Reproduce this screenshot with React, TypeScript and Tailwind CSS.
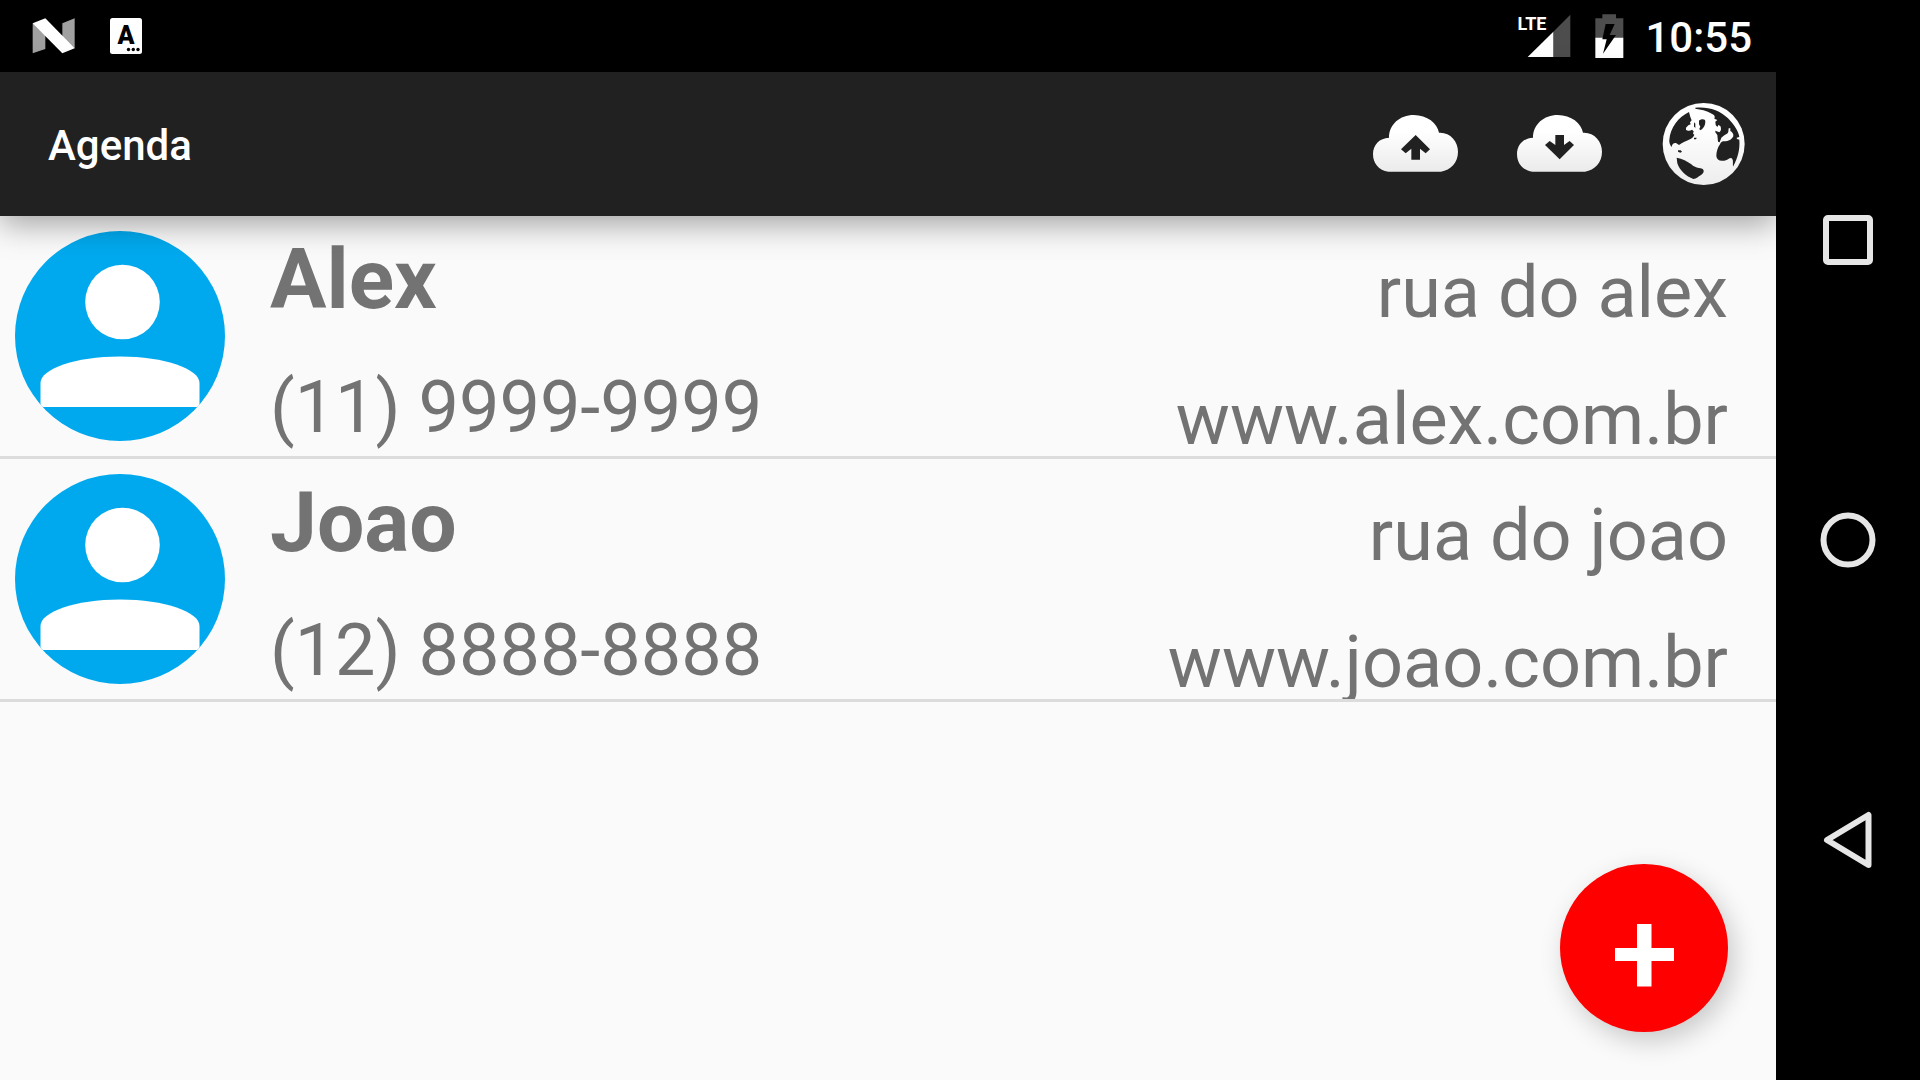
type Contact = {
  id: number;
  name: string;
  phone: string;
  address: string;
  site: string;
};

const contacts: Contact[] = [
  {
    id: 1,
    name: "Alex",
    phone: "(11) 9999-9999",
    address: "rua do alex",
    site: "www.alex.com.br",
  },
  {
    id: 2,
    name: "Joao",
    phone: "(12) 8888-8888",
    address: "rua do joao",
    site: "www.joao.com.br",
  },
];

export default function App() {
  return (
    <div className="flex min-h-screen bg-black font-[Roboto,sans-serif]">
      <div className="relative flex flex-1 flex-col overflow-hidden">
        <StatusBar />
        <AppBar />
        <main className="flex-1 bg-[#fafafa]">
          <ul>
            {contacts.map((contact) => (
              <ContactRow {...contact} key={contact.id} />
            ))}
          </ul>
        </main>
        <AddButton />
      </div>
      <NavigationBar />
    </div>
  );
}

function StatusBar() {
  return (
    <div className="flex h-18 items-center justify-between bg-black pr-6 pl-8 text-white">
      <div className="flex items-center gap-[34px]">
        <NougatIcon />
        <KeyboardIcon />
      </div>
      <div className="flex items-center">
        <SignalIcon />
        <BatteryIcon />
        <span className="ml-[21px] pt-1 text-[42px] leading-[48px] font-medium">
          10:55
        </span>
      </div>
    </div>
  );
}

function AppBar() {
  return (
    <header className="relative z-10 flex h-36 items-center justify-between bg-[#212121] pl-12 shadow-[0_8px_30px_rgba(0,0,0,0.36)]">
      <h1 className="pt-1 text-[42px] leading-[48px] font-medium text-white">
        Agenda
      </h1>
      <div className="flex">
        <ActionButton label="Upload">
          <CloudIcon id="cloud-up" arrow="M227 165 L270 208 L257 220 L240 206 V239 H214 V206 L197 220 L183 208 Z" />
        </ActionButton>
        <ActionButton label="Download">
          <CloudIcon id="cloud-down" arrow="M227 238 L270 195 L257 183 L240 195 V165 H214 V195 L197 183 L183 195 Z" />
        </ActionButton>
        <ActionButton label="Map">
          <GlobeIcon />
        </ActionButton>
      </div>
    </header>
  );
}

function ActionButton({
  label,
  children,
}: {
  label: string;
  children: React.ReactNode;
}) {
  return (
    <button
      type="button"
      aria-label={label}
      className="flex size-36 items-center justify-center"
    >
      {children}
    </button>
  );
}

function ContactRow({ name, phone, address, site }: Contact) {
  return (
    <li className="flex h-[243px] justify-between overflow-hidden border-b-3 border-[#dcdcdc] pr-12 pl-[15px] text-[72px] leading-[96px] text-[#737373]">
      <div className="flex items-start gap-[45px] pt-[15px]">
        <Avatar />
        <div className="flex flex-col gap-8 pt-px">
          <h2 className="text-[84px] leading-[96px] font-bold">{name}</h2>
          <p>{phone}</p>
        </div>
      </div>
      <div className="flex flex-col items-end gap-[31px] pt-[29px]">
        <p>{address}</p>
        <a href={`http://${site}`}>{site}</a>
      </div>
    </li>
  );
}

function Avatar() {
  return (
    <svg viewBox="0 0 210 210" className="size-[210px] shrink-0">
      <clipPath id="avatar-clip">
        <circle cx="105" cy="105" r="105" />
      </clipPath>
      <g clipPath="url(#avatar-clip)">
        <rect width="210" height="210" fill="#00a9ee" />
        <circle cx="107.5" cy="71" r="37.3" fill="#fff" />
        <path
          d="M25.5 176 V152 C25.5 138 60 125.5 105 125.5 S184.5 138 184.5 152 V176 Z"
          fill="#fff"
        />
      </g>
    </svg>
  );
}

function AddButton() {
  return (
    <button
      type="button"
      aria-label="Add contact"
      className="absolute right-12 bottom-12 size-42 rounded-full bg-[#ff0000] shadow-[6px_9px_27px_rgba(0,0,0,0.2)]"
    >
      <svg viewBox="0 0 168 168" className="size-full">
        <path d="M77 60 H91.5 V84 H114 V97 H91.5 V122.5 H77 V97 H55 V84 H77 Z" fill="#fff" />
      </svg>
    </button>
  );
}

function NavigationBar() {
  return (
    <nav className="flex w-36 shrink-0 flex-col bg-black py-[90px]">
      <NavButton label="Recent apps">
        <rect x="26" y="26" width="44" height="44" rx="2" />
      </NavButton>
      <NavButton label="Home">
        <circle cx="48" cy="48" r="24.5" />
      </NavButton>
      <NavButton label="Back">
        <path d="M27 48 L68.5 23 V73 Z" />
      </NavButton>
    </nav>
  );
}

function NavButton({
  label,
  children,
}: {
  label: string;
  children: React.ReactNode;
}) {
  return (
    <button
      type="button"
      aria-label={label}
      className="flex flex-1 items-center justify-center"
    >
      <svg
        viewBox="0 0 96 96"
        className="size-24"
        fill="none"
        stroke="#e6e6e6"
        strokeWidth="6"
        strokeLinejoin="round"
      >
        {children}
      </svg>
    </button>
  );
}

function NougatIcon() {
  return (
    <svg viewBox="97 54 132 108" className="h-9 w-11">
      <path d="M99 70 L137 85 V147 L99 160 Z" fill="#a0a0a0" />
      <path d="M188 70 L225 55 V145 L188 130 Z" fill="#a0a0a0" />
      <path d="M99 70 L137 55 L225 145 L188 160 Z" fill="#fff" />
    </svg>
  );
}

function KeyboardIcon() {
  return (
    <svg viewBox="0 0 32 36" className="h-9 w-8">
      <rect width="32" height="36" rx="2.5" fill="#fff" />
      <text
        x="16"
        y="26"
        textAnchor="middle"
        fontSize="25"
        fontWeight="900"
        fill="#000"
      >
        A
      </text>
      <circle cx="18.5" cy="31.5" r="1.7" />
      <circle cx="23.3" cy="31.5" r="1.7" />
      <circle cx="28" cy="31.5" r="1.7" />
    </svg>
  );
}

function SignalIcon() {
  return (
    <div className="relative h-11 w-[54px]">
      <svg viewBox="80 42 162 132" className="size-full">
        <path d="M189 95 L240 44 V171 H189 Z" fill="#4d4d4d" />
        <path d="M112 171 L189 95 V171 Z" fill="#fff" />
      </svg>
      <span className="absolute top-0 left-0 font-['Liberation_Sans_Narrow','Roboto',sans-serif] text-[18px] leading-5 font-bold">
        LTE
      </span>
    </div>
  );
}

function BatteryIcon() {
  return (
    <svg viewBox="314 42 87 132" className="ml-6 h-11 w-[29px]">
      <path d="M336 43 H377 V55 H399 V113 H315 V55 H336 Z" fill="#4d4d4d" />
      <path d="M315 113 H399 V174 H315 Z" fill="#fff" />
      <path d="M346 72 H373 L358 105 H377 L338 161 L349 118 H336 Z" fill="#000" />
    </svg>
  );
}

function CloudIcon({ id, arrow }: { id: string; arrow: string }) {
  return (
    <svg viewBox="99 105 258 174" className="h-[58px] w-[86px]">
      <linearGradient id={id} x1="0" y1="0" x2="0" y2="1">
        <stop offset="0.3" stopColor="#fff" />
        <stop offset="1" stopColor="#ebebeb" />
      </linearGradient>
      <path
        d="M147 173 C147 133 180 105 221 105 C262 105 292 130 297 158 C330 156 354 183 354 215 C354 248 332 270 303 275 H145 C116 271 99 250 99 222 C99 194 119 174 147 173 Z"
        fill={`url(#${id})`}
      />
      <path d={arrow} fill="#212121" />
    </svg>
  );
}

function GlobeIcon() {
  return (
    <svg viewBox="6 7 252 252" className="size-21">
      <linearGradient id="globe" x1="0" y1="0" x2="0" y2="1">
        <stop offset="0.3" stopColor="#fff" />
        <stop offset="1" stopColor="#ededed" />
      </linearGradient>
      <circle cx="131" cy="133" r="123" fill="url(#globe)" />
      <g fill="#212121">
        {/* pacific */}
        <path d="M87 37 C55 52 31 85 28 120 C27 128 30 136 35 142 C36 133 41 129 48 130 L57 136 C67 128 80 124 90 119 C96 115 101 112 103 105 L99 102 L101 95 L96 90 C90 95 82 94 78 90 L78 84 L85 77 L92 74 L90 68 L95 62 L91 52 Z" />
        {/* hudson bay and the lakes */}
        <path d="M102 68 L106 72 V86 L102 80 Z" />
        <path d="M117 63 C121 58 131 57 135 61 C137 67 136 74 132 81 L126 89 L120 92 L118 87 L121 81 L117 74 Z" />
        <path d="M102 114 H110 L108 119 H102 Z" />
        <path d="M54 152 H62 L66 156 L61 159 L54 156 Z" />
        {/* south pacific */}
        <path d="M50 174 C67 176 82 186 94 194 C107 207 120 204 128 208 C134 213 131 221 122 227 C115 231 110 237 100 238 C79 231 58 211 52 191 Z" />
        {/* arctic ocean and north atlantic */}
        <path d="M106 24 C143 20 180 31 204 56 C225 78 236 97 238 112 L230 114 L231 118 L238 120 C240 147 235 172 219 201 C218 188 221 180 214 175 C206 173 201 184 191 183 C178 185 170 180 169 169 C169 156 173 144 180 134 C183 127 186 125 190 125 C203 126 216 120 220 110 C221 101 216 97 211 94 V86 H206 L205 96 C203 103 197 103 191 108 L184 114 L179 128 L174 126 L172 106 L166 98 L166 93 L178 98 C184 94 184 86 181 79 L175 76 L172 82 L167 76 L166 66 L172 61 L163 57 C168 47 158 44 151 40 C140 33 122 29 106 27 Z" />
      </g>
    </svg>
  );
}
